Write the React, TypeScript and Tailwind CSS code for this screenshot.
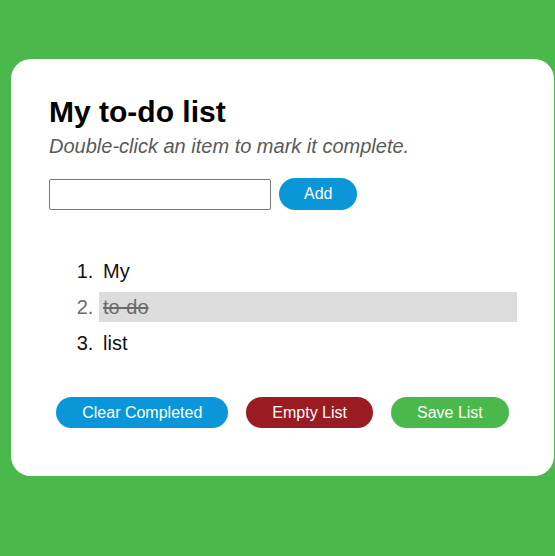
import React from "react";

export default function App() {
  const items = [
    { text: "My", done: false },
    { text: "to-do", done: true },
    { text: "list", done: false },
  ];
  return (
    <div
      className="min-h-screen w-full bg-[#4bb84c] pt-[59px] pl-[11px]"
      style={{ fontFamily: '"Liberation Sans", Arial, sans-serif' }}
    >
      <div className="w-[543px] h-[417px] bg-white rounded-[20px] pt-[36px] pl-[38px] pr-[37px]">
        <h1 className="text-[30px] leading-[34px] font-bold text-black">My to-do list</h1>
        <p className="mt-[6px] text-[20px] leading-[23px] italic text-[#5a5a5a]">
          Double-click an item to mark it complete.
        </p>
        <div className="mt-[20px] flex items-center gap-[8px]">
          <input
            type="text"
            className="w-[222px] h-[31px] border border-[#767676] rounded-[2px] bg-white"
          />
          <button className="h-[32px] px-[25px] rounded-full bg-[#0a96d8] text-white text-[16px] leading-[32px]">
            Add
          </button>
        </div>
        <ol className="mt-[46px] pl-[50px] list-decimal list-outside">
          {items.map((it, i) => (
            <li
              key={i}
              className={
                "py-[4px] pl-[4px] text-[20px] leading-[22px] mb-[6px] " +
                (it.done ? "bg-[#dcdcdc] text-[#6b6b6b]" : "text-[#111]")
              }
            >
              <span className={it.done ? "line-through" : ""}>{it.text}</span>
            </li>
          ))}
        </ol>
        <div className="mt-[39px] flex justify-center gap-[18px] pr-[1px]">
          <button className="h-[31px] px-[26px] rounded-full bg-[#0a96d8] text-white text-[16px] leading-[31px]">
            Clear Completed
          </button>
          <button className="h-[31px] px-[26px] rounded-full bg-[#9a1b21] text-white text-[16px] leading-[31px]">
            Empty List
          </button>
          <button className="h-[31px] px-[26px] rounded-full bg-[#4bb84c] text-white text-[16px] leading-[31px]">
            Save List
          </button>
        </div>
      </div>
    </div>
  );
}
